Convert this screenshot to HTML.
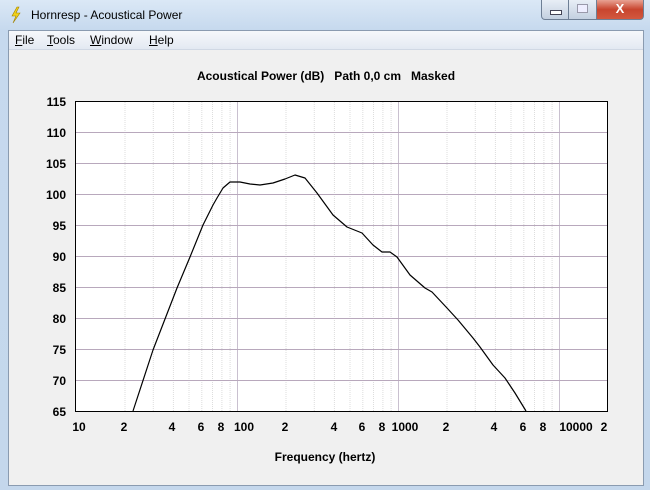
<!DOCTYPE html>
<html><head><style>
body{margin:0;width:650px;height:490px;overflow:hidden;background:#c9dcef;font-family:"Liberation Sans",sans-serif;}
.win{position:absolute;left:0;top:0;width:650px;height:490px;background:linear-gradient(#dbe8f6,#c6d9ee 30px,#c4d7ec);}
.title{position:absolute;left:31px;top:8px;font-size:12px;color:#000;}
.client{position:absolute;left:8px;top:30px;width:634px;height:454px;background:#f0f0f0;border:1px solid #8a9bb0;}
.menu{position:absolute;left:0;top:0;width:634px;height:18px;background:linear-gradient(#f6f8fb,#e3e9f2);border-bottom:1px solid #d0d8e4;font-size:12px;}
.menu span{position:absolute;top:2px;}
.btn{position:absolute;top:0;height:19px;border:1px solid #6e7f95;border-top:none;}
</style></head><body>
<div class="win">
<svg style="position:absolute;left:8px;top:6px" width="16" height="18"><path d="M9 1 L4 10 L8 10 L5 17 L12 7 L8 7 L11 1Z" fill="#f2d21a" stroke="#a08000" stroke-width="0.6"/></svg>
<div class="title">Hornresp - Acoustical Power</div>
<div class="btn" style="left:541px;width:26px;background:linear-gradient(#e8eef6,#c3d0e0);border-radius:0 0 0 4px"><div style="position:absolute;left:8px;top:10px;width:10px;height:3px;background:#fff;border:1px solid #445"></div></div>
<div class="btn" style="left:568px;width:27px;background:linear-gradient(#e8eef6,#c3d0e0)"><div style="position:absolute;left:8px;top:4px;width:9px;height:7px;border:1px solid #99a;background:#eef"></div></div>
<div class="btn" style="left:596px;width:46px;background:linear-gradient(#e8a293,#c8452e 50%,#d2583f);border-radius:0 0 4px 0;color:#fff;font-weight:bold;font-size:13px;text-align:center;line-height:18px">X</div>
<div class="client">
<div class="menu"><span style="left:6px"><u>F</u>ile</span><span style="left:38px"><u>T</u>ools</span><span style="left:81px"><u>W</u>indow</span><span style="left:140px"><u>H</u>elp</span></div>
</div>
<svg style="position:absolute;left:0;top:0" width="650" height="490" font-family="Liberation Sans, sans-serif" font-weight="bold" font-size="12">
<text x="326" y="80" text-anchor="middle" style="white-space:pre">Acoustical Power (dB)   Path 0,0 cm   Masked</text>
<rect x="75.5" y="101.5" width="532" height="310" fill="#fff" stroke="#000"/>
<g stroke="#ddd" stroke-dasharray="1,1">
<path d="M125 102V411M153.3 102V411M173.4 102V411M189 102V411M201.8 102V411M212.5 102V411M221.9 102V411M230.1 102V411M286 102V411M314.3 102V411M334.4 102V411M350 102V411M362.8 102V411M373.5 102V411M382.9 102V411M391.1 102V411M447 102V411M475.3 102V411M495.4 102V411M511 102V411M523.8 102V411M534.5 102V411M543.9 102V411M552.1 102V411"/>
</g>
<g stroke="#c9c0cf"><path d="M237.5 102V411M398.5 102V411M559.5 102V411"/>
<path d="M76 132.5H607M76 163.5H607M76 194.5H607M76 225.5H607M76 256.5H607M76 287.5H607M76 318.5H607M76 349.5H607M76 380.5H607" stroke="#b8a8bc"/></g>
<polyline fill="none" stroke="#000" stroke-width="1.2" stroke-linejoin="round" points="133,411 153,350 177,288 190,257 203,225 213,205 217,198 223,188 230,182 240,182 250,184 260,185 273,183 285,179 295,175 305,178 317,193 333,215 347,227 362,233 373,245 382,252 390,252 397,257 410,275 425,288 432,292 447,308 458,320 473,338 480,347 493,365 505,378 515,393 526,411"/>
<g text-anchor="end"><text x="66" y="106">115</text><text x="66" y="137">110</text><text x="66" y="168">105</text><text x="66" y="199">100</text><text x="66" y="230">95</text><text x="66" y="261">90</text><text x="66" y="292">85</text><text x="66" y="323">80</text><text x="66" y="354">75</text><text x="66" y="385">70</text><text x="66" y="416">65</text></g>
<g text-anchor="middle"><text x="79" y="431">10</text><text x="124" y="431">2</text><text x="172" y="431">4</text><text x="201" y="431">6</text><text x="221" y="431">8</text><text x="244" y="431">100</text><text x="285" y="431">2</text><text x="334" y="431">4</text><text x="362" y="431">6</text><text x="382" y="431">8</text><text x="405" y="431">1000</text><text x="446" y="431">2</text><text x="494" y="431">4</text><text x="523" y="431">6</text><text x="543" y="431">8</text><text x="576" y="431">10000</text><text x="604" y="431">2</text>
<text x="325" y="461">Frequency (hertz)</text></g>
</svg>
</div>
</body></html>
